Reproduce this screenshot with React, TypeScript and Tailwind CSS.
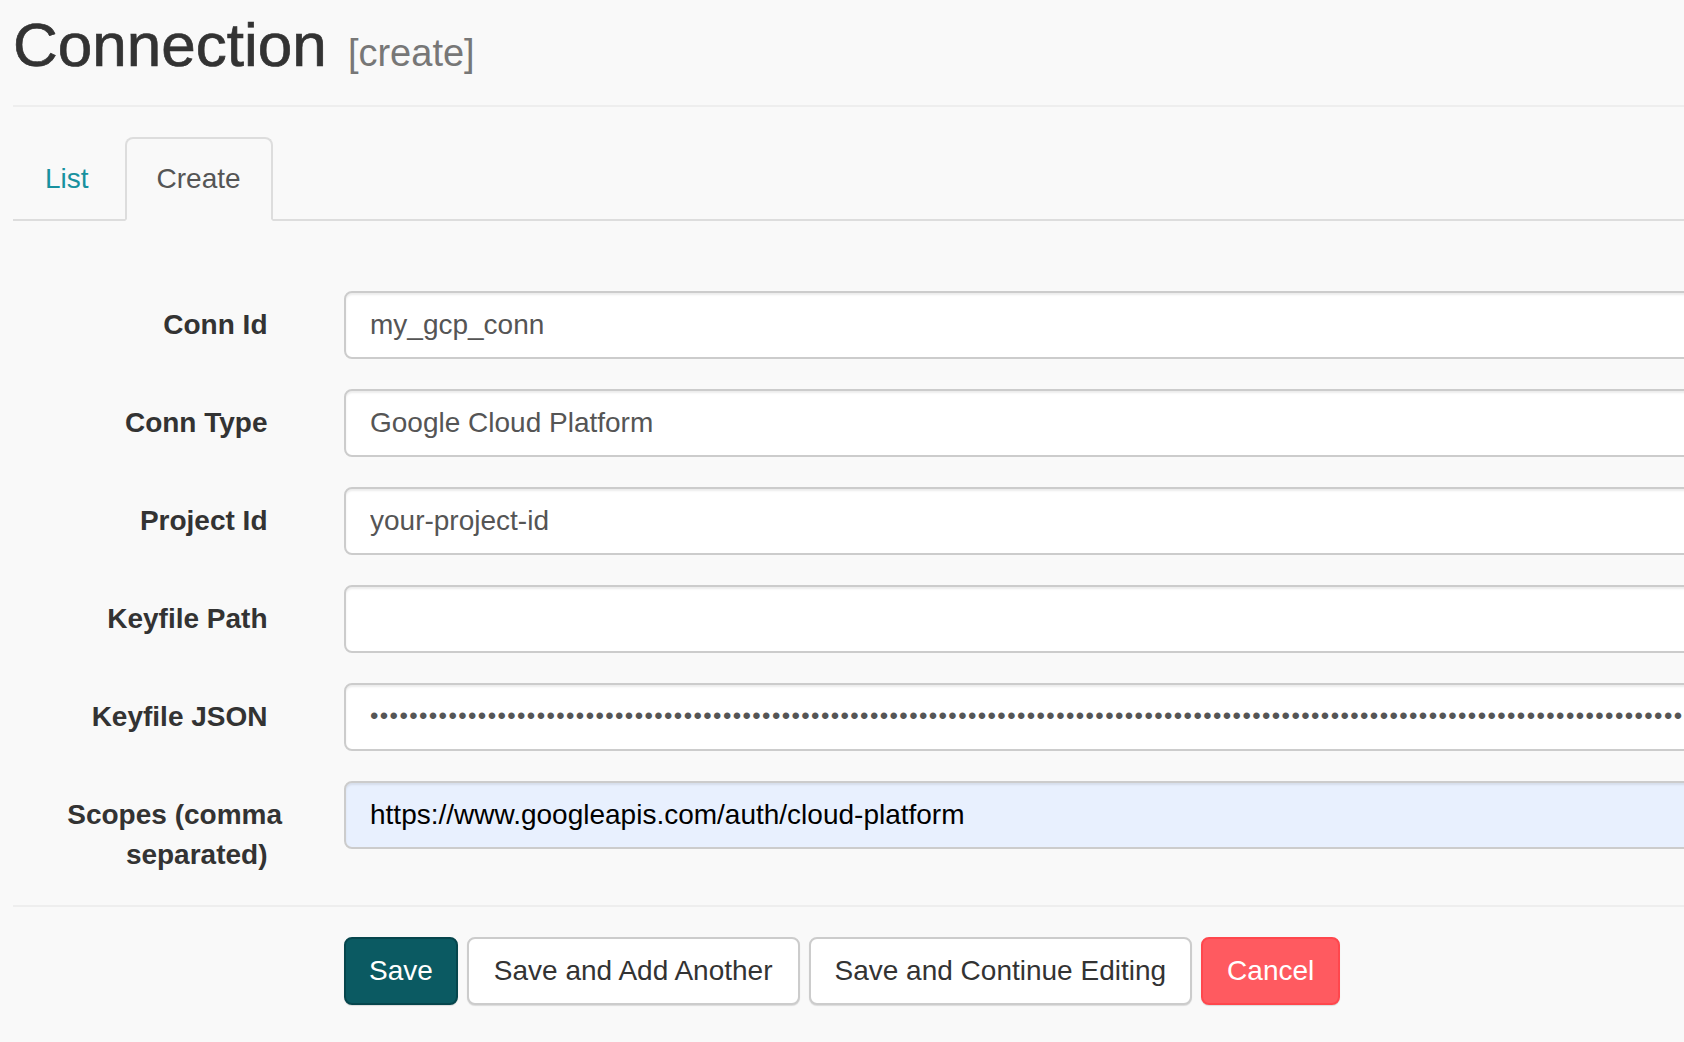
import React from "react";

interface Field {
  label: string;
  value: string;
  autofill?: boolean;
  masked?: boolean;
}

const fields: Field[] = [
  { label: "Conn Id", value: "my_gcp_conn" },
  { label: "Conn Type", value: "Google Cloud Platform" },
  { label: "Project Id", value: "your-project-id" },
  { label: "Keyfile Path", value: "" },
  // masked keyfile contents
  { label: "Keyfile JSON", value: "\u2022".repeat(200), masked: true },
  { label: "Scopes (comma separated)", value: "https://www.googleapis.com/auth/cloud-platform", autofill: true },
];

const App = () => {
  return (
    <div className="min-h-screen w-full overflow-hidden bg-[#f9f9f9] font-['Liberation_Sans',Arial,sans-serif] text-[#333]">
      <div className="w-[1740px] pl-[13px]">
        {/* Page header */}
        <div className="border-b-2 border-[#eee] pb-[18px]">
          <h1 className="mt-[11px] text-[62px] leading-[68px] font-normal text-[#333] [-webkit-text-stroke:0.7px_#333]">
            Connection{" "}
            <small className="ml-[4px] text-[38px] text-[#777] [-webkit-text-stroke:0px]">[create]</small>
          </h1>
        </div>

        {/* Tabs */}
        <ul className="mt-[30px] flex border-b-2 border-[#ddd]">
          <li className="-mb-[2px] mr-[4px]">
            <a className="block rounded-t-[8px] border-2 border-transparent px-[30px] py-[20px] text-[28px] leading-[40px] text-[#18919f]">
              List
            </a>
          </li>
          <li className="-mb-[2px]">
            <a className="block rounded-t-[8px] border-2 border-[#ddd] border-b-[#f9f9f9] bg-[#f9f9f9] px-[30px] py-[20px] text-[28px] leading-[40px] text-[#555]">
              Create
            </a>
          </li>
        </ul>

        {/* Form */}
        <form className="mt-[70px]" onSubmit={(e) => e.preventDefault()}>
          {fields.map((field) => (
            <div key={field.label} className="mb-[30px] flex items-start">
              <label className="w-[269px] shrink-0 pt-[14px] text-right text-[28px] leading-[40px] font-bold text-[#333]">
                <span className="pr-[14.5px]">{field.label}</span>
              </label>
              <input
                type="text"
                defaultValue={field.value}
                className={`ml-[62px] h-[68px] flex-1 rounded-[8px] border-2 border-[#ccc] px-[24px] shadow-[inset_0_2px_2px_rgba(0,0,0,0.075)] outline-none ${
                  field.masked ? "pb-[2px] text-[24px] tracking-[1.4px]" : "text-[28px]"
                } ${field.autofill ? "bg-[#e8f0fe] text-[#000]" : "bg-white text-[#555]"}`}
              />
            </div>
          ))}

          <div className="border-t-2 border-[#eee]" />

          {/* Actions */}
          <div className="mt-[30px] flex gap-[9px] pl-[331px]">
            <button className="h-[68px] rounded-[8px] border-2 border-[#06464d] bg-[#0b5a62] px-[23px] text-[28px] text-white shadow-[0_1px_1px_rgba(0,0,0,0.12)]">
              Save
            </button>
            <button className="h-[68px] rounded-[8px] border-2 border-[#ccc] bg-white px-[25px] text-[28px] text-[#333] shadow-[0_1px_1px_rgba(0,0,0,0.12)]">
              Save and Add Another
            </button>
            <button className="h-[68px] rounded-[8px] border-2 border-[#ccc] bg-white px-[24px] text-[28px] text-[#333] shadow-[0_1px_1px_rgba(0,0,0,0.12)]">
              Save and Continue Editing
            </button>
            <button className="h-[68px] rounded-[8px] border-2 border-[#ff474d] bg-[#ff5a60] px-[24px] text-[28px] text-white shadow-[0_1px_1px_rgba(0,0,0,0.12)]">
              Cancel
            </button>
          </div>
        </form>
      </div>
    </div>
  );
};

export default App;
